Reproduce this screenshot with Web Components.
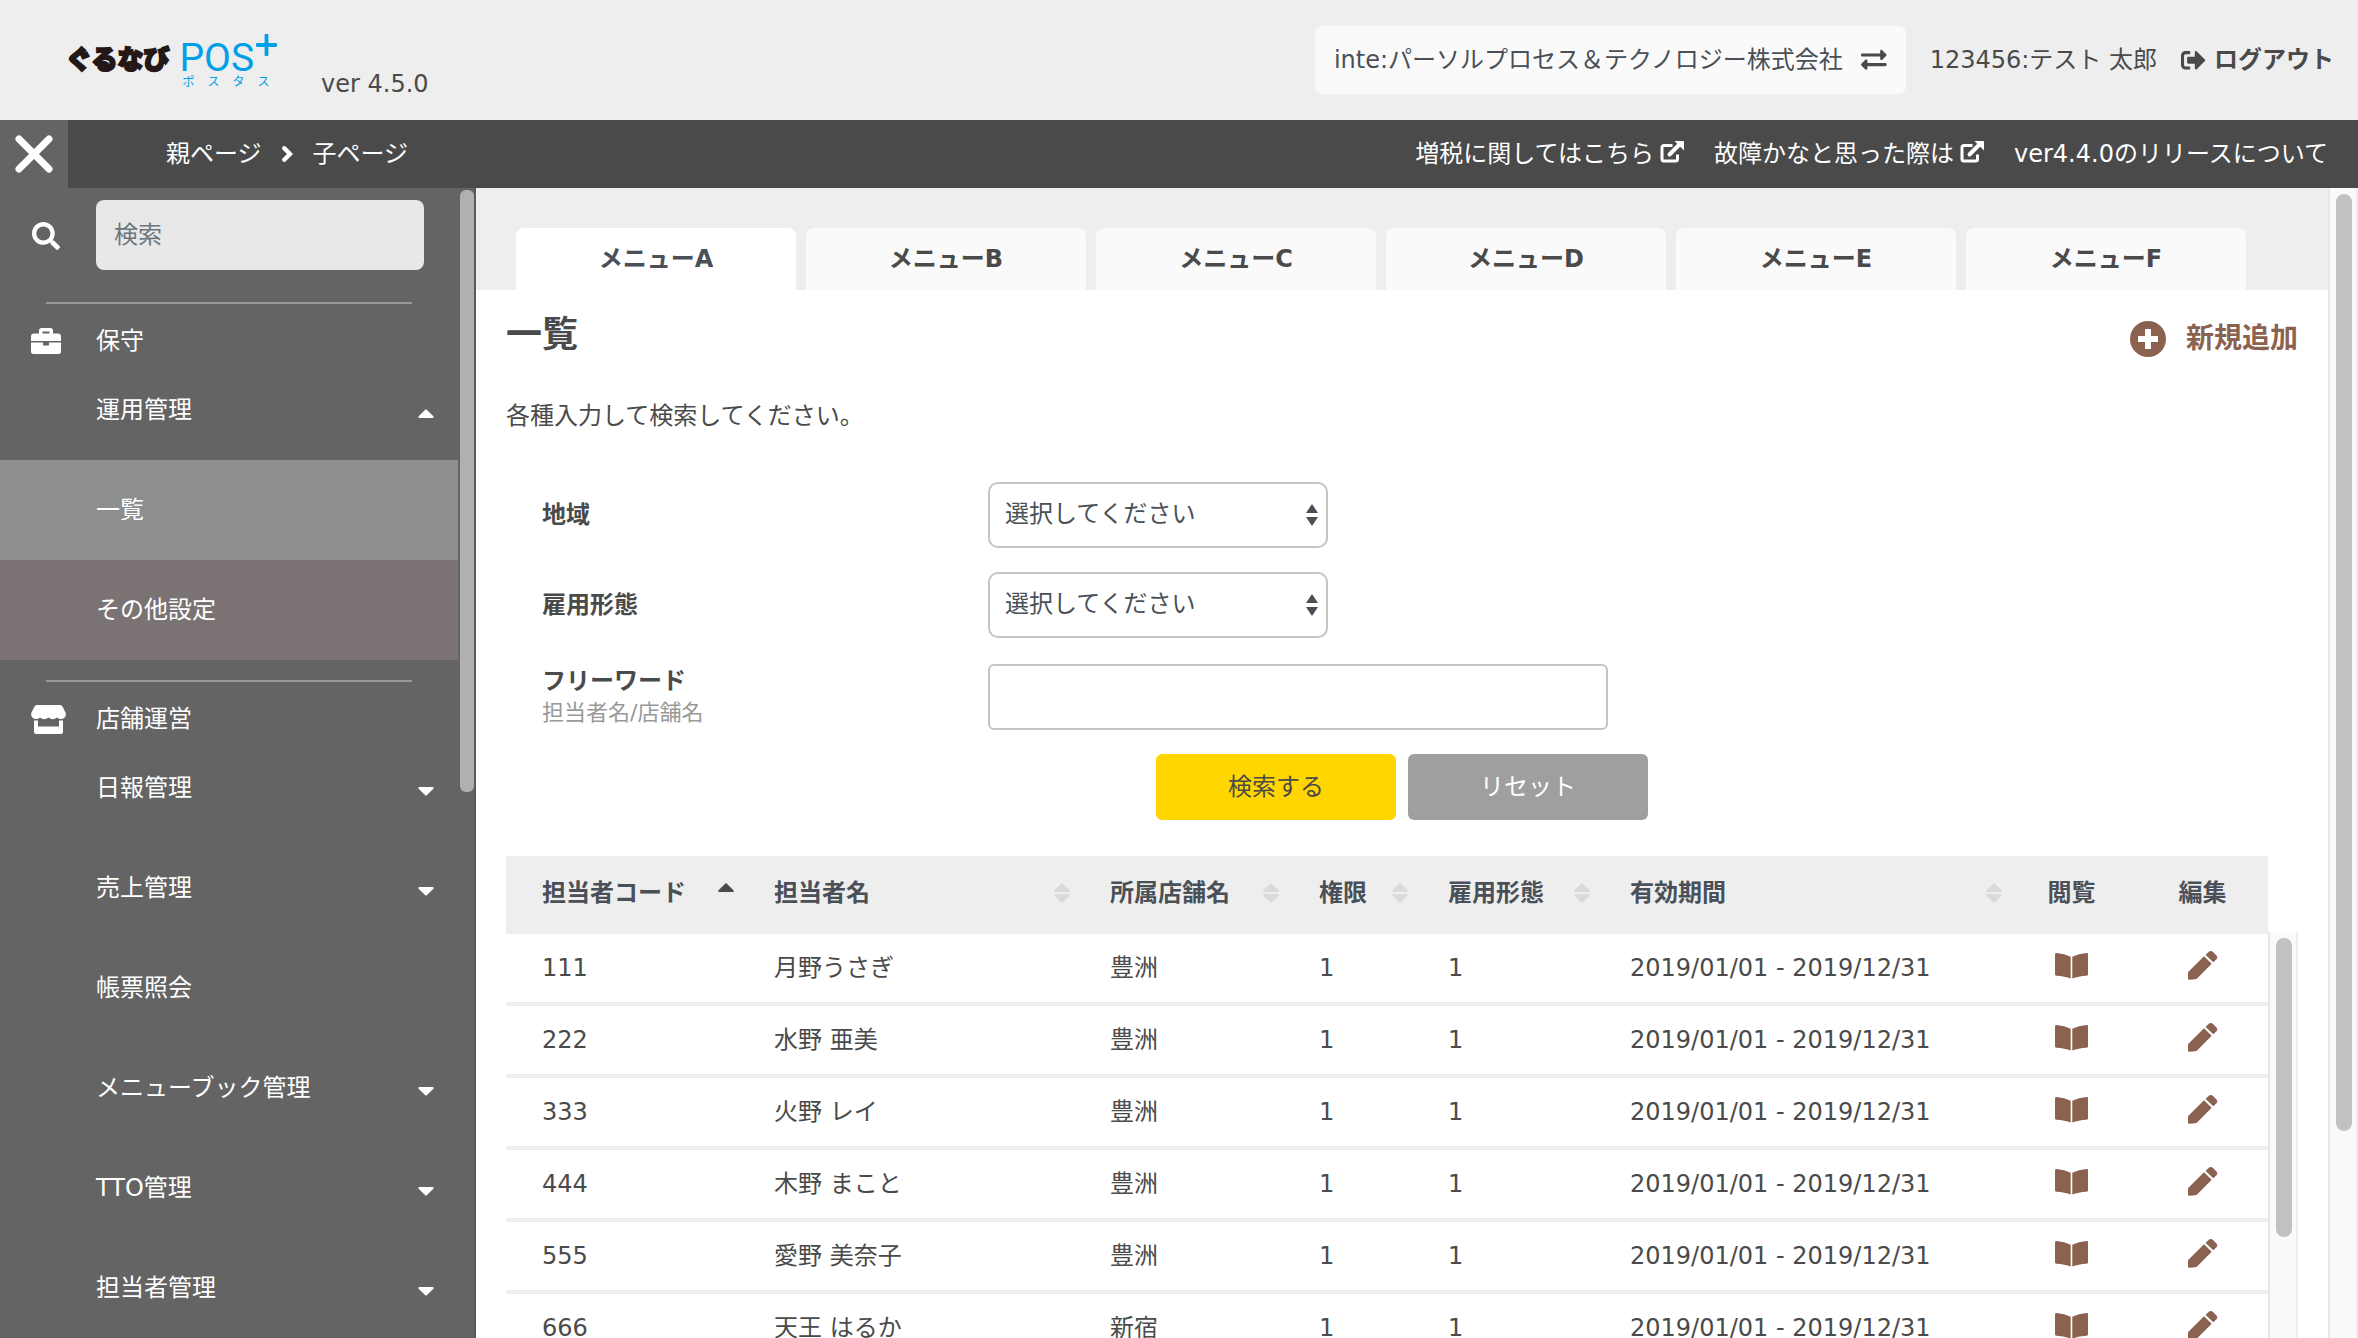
<!DOCTYPE html>
<html lang="ja">
<head>
<meta charset="utf-8">
<meta name="viewport" content="width=device-width, initial-scale=1">
<title>一覧</title>
<style>
  html, body { margin: 0; height: 100%; }
  body {
    font-family: "DejaVu Sans", "Noto Sans CJK JP", sans-serif;
    font-size: 24px;
    line-height: 36px;
    color: #4a4a4a;
    background: #fff;
    overflow: hidden;
  }
</style>
</head>
<body>
<pos-app></pos-app>

<script>
const base = `
  *, *::before, *::after { box-sizing: border-box; }
  a { color: inherit; text-decoration: none; }
  button, input, select { font: inherit; color: inherit; margin: 0; }
  button { cursor: pointer; border: 0; background: none; padding: 0; }
`;

class PosElement extends HTMLElement {
  connectedCallback() {
    if (this.shadowRoot) return;
    this.attachShadow({ mode: 'open' }).innerHTML = `<style>${base}${this.css()}</style>${this.html()}`;
  }
  css() { return ''; }
  html() { return '<slot></slot>'; }
}

const icons = {
  close: [38, 38, '<path d="M4 4L34 34M34 4L4 34" stroke="currentColor" stroke-width="7" stroke-linecap="round" fill="none"/>'],
  chevron: [11, 16, '<path d="M2.300 2.300L8 8L2.300 13.700" stroke="currentColor" stroke-width="4.400" stroke-linecap="round" fill="none"/>'],
  external: [24, 22, '<path d="M12.500 4.500H4A2 2 0 0 0 2 6.500V18a2 2 0 0 0 2 2H15.500a2 2 0 0 0 2-2V13.500" stroke="currentColor" stroke-width="3" fill="none"/><path d="M9.500 13.500L19 4" stroke="currentColor" stroke-width="4" stroke-linecap="round" fill="none"/><path d="M14.500 0H23Q24 0 24 1V9.500Z" fill="currentColor"/>'],
  swap: [26, 26, '<path transform="scale(.05)" fill="currentColor" d="M0 168v-16c0-13 11-24 24-24h360V80c0-21 26-32 41-17l80 80c9 9 9 25 0 34l-80 80c-15 15-41 4-41-17v-48H24c-13 0-24-11-24-24zm488 152H128v-48c0-21-26-32-41-17l-80 80c-9 9-9 25 0 34l80 80c15 15 41 4 41-17v-48h360c13 0 24-11 24-24v-16c0-13-11-24-24-24z"/>'],
  logout: [25, 24, '<path transform="scale(.048)" fill="currentColor" d="M497 273L329 441c-15 15-41 4.500-41-17v-96H152c-13.300 0-24-10.700-24-24v-96c0-13.300 10.700-24 24-24h136V88c0-21.400 25.900-32 41-17l168 168c9.300 9.400 9.300 24.600 0 34zM192 436v-40c0-6.600-5.400-12-12-12H96c-17.700 0-32-14.300-32-32V160c0-17.700 14.300-32 32-32h84c6.600 0 12-5.400 12-12V76c0-6.600-5.400-12-12-12H96c-53 0-96 43-96 96v192c0 53 43 96 96 96h84c6.600 0 12-5.400 12-12z"/>'],
  search: [29, 29, '<path transform="translate(1 1) scale(.0547)" fill="currentColor" d="M505 442.700L405.300 343c-4.500-4.500-10.600-7-17-7H372c27.600-35.300 44-79.700 44-128C416 93.100 322.900 0 208 0S0 93.100 0 208s93.100 208 208 208c48.300 0 92.700-16.400 128-44v16.300c0 6.400 2.500 12.500 7 17l99.700 99.700c9.400 9.400 24.600 9.400 33.900 0l28.300-28.300c9.400-9.400 9.400-24.600.1-34zM208 336c-70.700 0-128-57.200-128-128 0-70.700 57.200-128 128-128 70.700 0 128 57.200 128 128 0 70.700-57.200 128-128 128z"/>'],
  briefcase: [30, 26, '<path fill="currentColor" fill-rule="evenodd" d="M8 5.500V2.500Q8 0 10.500 0H19.500Q22 0 22 2.500V5.500H27Q30 5.500 30 8.500V13H0V8.500Q0 5.500 3 5.500ZM11.500 3.500V5.500H18.500V3.500ZM0 14.500H12V17.500H18V14.500H30V23.500Q30 26 27.500 26H2.500Q0 26 0 23.500Z"/>'],
  store: [35, 29, '<path fill="currentColor" d="M6 0H29Q30.500 0 31.500 1.500L34.500 7.500Q36 12.500 31 14Q28 14.500 26 12.500Q22 16 17.500 12.500Q13 16 9 12.500Q7 14.500 4 14Q-1 12.500.5 7.500L3.500 1.500Q4.500 0 6 0ZM3 15.500H7V21.500H28V15.500H32V27Q32 29 30 29H5Q3 29 3 27Z"/>'],
  up: [16, 10, '<path fill="currentColor" d="M8.700.7L15.400 7.300Q16.200 9 14.500 9H1.500Q-.2 9 .6 7.300L7.300.7Q8 0 8.700.7Z"/>'],
  down: [16, 10, '<path fill="currentColor" d="M8.700 8.300L15.400 1.700Q16.200 0 14.500 0H1.500Q-.2 0 .6 1.700L7.300 8.300Q8 9 8.700 8.300Z"/>'],
  spin: [12, 22, '<path fill="currentColor" d="M6 0L12 9H0ZM6 22L0 13H12Z"/>'],
  sort: [16, 20, '<path fill="currentColor" d="M8 0L15.500 7.300Q16.200 9 14.500 9H1.500Q-.2 9 .5 7.300ZM8 20L.5 12.700Q-.2 11 1.500 11H14.500Q16.200 11 15.500 12.700Z"/>'],
  sorted: [16, 20, '<path fill="currentColor" d="M8 0L15.500 7.300Q16.200 9 14.500 9H1.500Q-.2 9 .5 7.300Z"/>'],
  add: [36, 36, '<circle cx="18" cy="18" r="18" fill="currentColor"/><path d="M18 8V28M8 18H28" stroke="#fff" stroke-width="6"/>'],
  book: [33, 26, '<path fill="currentColor" d="M1.500 0Q9.500.8 15.700 3.700V25.600Q10 23.300 1.300 22.800Q0 22.600 0 21.500V1.400Q0 0 1.500 0ZM31.500 0Q23.500.8 17.300 3.700V25.600Q23 23.300 31.700 22.800Q33 22.600 33 21.500V1.400Q33 0 31.500 0Z"/>'],
  pencil: [30, 29, '<path fill="currentColor" d="M.6 20.600L16 5.300L23.700 12.700L9 27.400Q8.200 28.200 7 28.200L1.500 28.700Q0 28.700 0 27.200V22Q0 21.200.6 20.600ZM17.600 3.900L20.500 1Q22.700-.8 25 1L28.500 4.600Q30 6.500 28.500 8.200L25.300 11.300Z"/>'],
  plus: [21, 22, '<path d="M10.500 1.500V20.500M1.500 11H19.500" stroke="currentColor" stroke-width="3.800" stroke-linecap="round"/>'],
};

customElements.define('pos-icon', class extends PosElement {
  css() { return ':host { display: inline-flex; flex: none; } svg { display: block; }'; }
  html() {
    const [w, h, art] = icons[this.getAttribute('name')];
    return `<svg width="${w}" height="${h}" viewBox="0 0 ${w} ${h}" aria-hidden="true">${art}</svg>`;
  }
});

/* Vertical scroll track; --thumb is the thumb length in percent of the track. */
customElements.define('pos-rail', class extends PosElement {
  css() { return `
    :host { display: block; flex: none; width: 30px; padding: 6px; background: #fafafa; border-left: 2px solid #e8e8e8; border-right: 2px solid #ededed; box-sizing: border-box; }
    :host([dark]) { width: 18px; padding: 2px 0 0 2px; background: none; border-left: 0; border-right: 2px solid #5a5a5a; }
    div { height: var(--thumb); width: 16px; border-radius: 8px; background: #c1c1c1; }
    :host([dark]) div { width: 14px; border-radius: 6px; background: #b0b0b0; }`; }
  html() { return '<div></div>'; }
});

customElements.define('pos-logo', class extends PosElement {
  css() { return `
    :host { display: flex; align-items: flex-start; gap: 10px; padding-top: 10px; }
    .brand { font: 900 26px/32px "Noto Sans CJK JP", sans-serif; color: #231815; -webkit-text-stroke: 2px #231815; }
    .pos { display: flex; flex-direction: column; color: #00a0e9; }
    .word { display: flex; align-items: flex-start; gap: 2px; font: 400 39px/32px Roboto, sans-serif; }
    .word pos-icon { margin-top: -8px; }
    .kana { display: flex; gap: 13px; padding-left: 3px; font: 12px/14px "Noto Sans CJK JP", sans-serif; }`; }
  html() { return `
    <span class="brand">ぐるなび</span>
    <span class="pos">
      <span class="word"><span>POS</span><pos-icon name="plus"></pos-icon></span>
      <span class="kana"><span>ポ</span><span>ス</span><span>タ</span><span>ス</span></span>
    </span>`; }
});

customElements.define('pos-header', class extends PosElement {
  css() { return `
    :host { display: block; flex: none; background: #eee; }
    header { display: flex; align-items: center; height: 120px; padding: 0 24px 0 66px; }
    .ver { margin: 48px auto 0 44px; }
    .company { display: flex; align-items: center; gap: 18px; height: 68px; padding: 0 19px; border-radius: 8px; background: #fafafa; color: #495057; white-space: nowrap; }
    .company pos-icon { color: #4a4a4a; }
    .user { margin: 0 24px; white-space: nowrap; }
    .logout { display: flex; align-items: center; gap: 8px; font-weight: 700; white-space: nowrap; }`; }
  html() { return `
    <header>
      <pos-logo></pos-logo>
      <span class="ver">ver 4.5.0</span>
      <button class="company" type="button"><span>inte:パーソルプロセス＆テクノロジー株式会社</span><pos-icon name="swap"></pos-icon></button>
      <span class="user">123456:テスト 太郎</span>
      <a class="logout" href="#logout"><pos-icon name="logout"></pos-icon>ログアウト</a>
    </header>`; }
});

customElements.define('pos-nav', class extends PosElement {
  css() { return `
    :host { display: flex; flex: none; align-items: center; height: 68px; padding-right: 30px; background: #4a4a4a; color: #fff; }
    .close { display: grid; place-items: center; width: 68px; height: 68px; background: #646464; }
    nav { display: flex; align-items: center; }
    .crumbs { gap: 20px; margin: 0 auto 0 98px; }
    .links { gap: 30px; }
    a { display: flex; align-items: center; gap: 6px; white-space: nowrap; }
    a pos-icon { padding-bottom: 4px; }`; }
  html() { return `
    <button class="close" type="button" aria-label="閉じる"><pos-icon name="close"></pos-icon></button>
    <nav class="crumbs"><a href="#parent">親ページ</a><pos-icon name="chevron"></pos-icon><a href="#child">子ページ</a></nav>
    <nav class="links">
      <a href="#tax">増税に関してはこちら<pos-icon name="external"></pos-icon></a>
      <a href="#help">故障かなと思った際は<pos-icon name="external"></pos-icon></a>
      <a href="#release">ver4.4.0のリリースについて</a>
    </nav>`; }
});

customElements.define('side-section', class extends PosElement {
  css() { return `
    :host { display: block; padding-top: 20px; }
    hr { margin: 0 46px 18px; border: 0; height: 2px; background: #999; }
    h2 { display: flex; align-items: center; margin: 0; height: 38px; padding-left: 31px; font: inherit; }
    .icon { display: flex; width: 65px; }`; }
  html() { return `<hr><h2><span class="icon"><pos-icon name="${this.getAttribute('icon')}"></pos-icon></span>${this.getAttribute('label')}</h2><slot></slot>`; }
});

customElements.define('side-item', class extends PosElement {
  css() { return `
    :host { display: block; }
    :host([active]) { background: #8e8e8e; }
    :host([sub]) { background: #7b7373; }
    a { display: flex; align-items: center; justify-content: space-between; height: 100px; padding: 0 24px 0 96px; }
    pos-icon { padding-top: 8px; }`; }
  html() {
    const caret = this.getAttribute('caret');
    return `<a href="#"><slot></slot>${caret ? `<pos-icon name="${caret}"></pos-icon>` : ''}</a>`;
  }
});

customElements.define('pos-sidebar', class extends PosElement {
  css() { return `
    :host { display: flex; flex: none; width: 476px; background: #646464; color: #fff; overflow: hidden; }
    aside { flex: 1; min-width: 0; }
    .search { display: flex; align-items: center; padding: 12px 34px 12px 31px; }
    label { display: flex; width: 65px; }
    input { flex: 1; min-width: 0; height: 70px; padding: 0 18px; border: 0; border-radius: 8px; background: #e8e8e8; color: #4a4a4a; }
    input::placeholder { color: #6c757d; opacity: 1; }`; }
  html() { return `
    <aside>
      <div class="search"><label for="q" aria-label="検索"><pos-icon name="search"></pos-icon></label><input id="q" type="text" placeholder="検索"></div>
      <side-section icon="briefcase" label="保守">
        <side-item caret="up">運用管理</side-item>
        <side-item active>一覧</side-item>
        <side-item sub>その他設定</side-item>
      </side-section>
      <side-section icon="store" label="店舗運営">
        <side-item caret="down">日報管理</side-item>
        <side-item caret="down">売上管理</side-item>
        <side-item>帳票照会</side-item>
        <side-item caret="down">メニューブック管理</side-item>
        <side-item caret="down">TTO管理</side-item>
        <side-item caret="down">担当者管理</side-item>
      </side-section>
    </aside>
    <pos-rail dark style="--thumb: 52.400%"></pos-rail>`; }
});

customElements.define('pos-tabs', class extends PosElement {
  css() { return `
    :host { display: flex; gap: 10px; padding: 40px 82px 0 40px; background: #eee; }
    a { flex: 0 1 280px; height: 62px; line-height: 62px; text-align: center; font-weight: 700; white-space: nowrap; background: #fafafa; border-radius: 8px 8px 0 0; }
    a[aria-current] { background: #fff; color: #495057; }`; }
  html() {
    return [...'ABCDEF'].map((c, i) => `<a href="#${c}"${i ? '' : ' aria-current="page"'}>メニュー${c}</a>`).join('');
  }
});

customElements.define('pos-field', class extends PosElement {
  css() { return `
    :host { display: flex; align-items: center; padding-left: 36px; }
    :host([text]) { padding-top: 2px; }
    .label { width: 446px; font-weight: 700; }
    .label label { display: block; line-height: 32px; }
    small { display: block; font-size: 22px; line-height: 32px; font-weight: 400; color: #999; }
    .select { display: grid; width: 340px; color: #495057; }
    .select > * { grid-area: 1 / 1; }
    .select pos-icon { place-self: center end; padding-right: 10px; pointer-events: none; }
    select, input { width: 100%; height: 66px; border: 2px solid #c4c4c4; border-radius: 10px; background: #fff; padding: 0 15px 3px; appearance: none; }
    input { width: 620px; border-radius: 6px; }`; }
  html() {
    const note = this.getAttribute('note');
    const control = this.hasAttribute('text')
      ? '<input id="f" type="text">'
      : '<div class="select"><select id="f"><option>選択してください</option></select><pos-icon name="spin"></pos-icon></div>';
    return `<div class="label"><label for="f">${this.getAttribute('label')}</label>${note ? `<small>${note}</small>` : ''}</div>${control}`;
  }
});

customElements.define('staff-table', class extends PosElement {
  css() { return `
    :host { display: flex; flex: 1; min-height: 0; }
    .view { flex: 1; min-width: 0; overflow: hidden; }
    table { width: 100%; table-layout: fixed; border-collapse: separate; border-spacing: 0; }
    th, td { padding: 0 0 0 36px; text-align: left; white-space: nowrap; }
    th { height: 78px; padding-bottom: 4px; background: #eee; color: #495057; }
    td { height: 72px; border-bottom: 4px solid #eee; }
    .act { padding-left: 0; text-align: center; }
    .act a { display: inline-flex; vertical-align: middle; padding-bottom: 6px; color: #8b614f; }
    .sort { display: flex; align-items: center; justify-content: space-between; width: 100%; padding-right: 4px; font-weight: 700; }
    .sort pos-icon { color: #dadada; }
    .sort pos-icon[name=sorted] { color: #4a4a4a; }
    pos-rail { margin-top: 76px; }`; }
  html() {
    const cols = [['担当者コード', 232], ['担当者名', 336], ['所属店舗名', 209], ['権限', 129], ['雇用形態', 182], ['有効期間', 0]];
    const rows = [['111', '月野うさぎ', '豊洲'], ['222', '水野 亜美', '豊洲'], ['333', '火野 レイ', '豊洲'], ['444', '木野 まこと', '豊洲'], ['555', '愛野 美奈子', '豊洲'], ['666', '天王 はるか', '新宿']];
    return `
    <div class="view"><table>
      <colgroup>${cols.map(c => `<col${c[1] ? ` style="width:${c[1]}px"` : ''}>`).join('')}<col style="width:131px"><col style="width:131px"></colgroup>
      <thead><tr>${cols.map((c, i) => `<th><button class="sort" type="button">${c[0]}<pos-icon name="${i ? 'sort' : 'sorted'}"></pos-icon></button></th>`).join('')}<th class="act">閲覧</th><th class="act">編集</th></tr></thead>
      <tbody>${rows.map(r => `<tr>${r.map(v => `<td>${v}</td>`).join('')}<td>1</td><td>1</td><td>2019/01/01 - 2019/12/31</td>
        <td class="act"><a href="#view" aria-label="閲覧"><pos-icon name="book"></pos-icon></a></td>
        <td class="act"><a href="#edit" aria-label="編集"><pos-icon name="pencil"></pos-icon></a></td></tr>`).join('')}</tbody>
    </table></div>
    <pos-rail style="--thumb: 76%"></pos-rail>`;
  }
});

customElements.define('pos-main', class extends PosElement {
  css() { return `
    :host { display: flex; flex: 1; min-width: 0; min-height: 0; }
    main { flex: 1; min-width: 0; display: flex; flex-direction: column; }
    .body { flex: 1; min-height: 0; display: flex; flex-direction: column; padding: 20px 30px 0; }
    .head { display: flex; justify-content: space-between; align-items: flex-start; height: 56px; }
    h1 { margin: 0; font-size: 36px; line-height: 50px; }
    .add { display: flex; align-items: center; gap: 20px; font-size: 28px; line-height: 58px; font-weight: 700; color: #8b614f; }
    p { margin: 32px 0 48px; }
    form { display: flex; flex-direction: column; gap: 24px; }
    .buttons { display: flex; justify-content: center; gap: 12px; margin-bottom: 36px; }
    .buttons button { width: 240px; height: 66px; border-radius: 6px; background: #ffd600; }
    .buttons button[type=reset] { background: #9f9f9f; color: #fff; }`; }
  html() { return `
    <main>
      <pos-tabs></pos-tabs>
      <div class="body">
        <div class="head"><h1>一覧</h1><a class="add" href="#new"><pos-icon name="add"></pos-icon>新規追加</a></div>
        <p>各種入力して検索してください。</p>
        <form>
          <pos-field label="地域"></pos-field>
          <pos-field label="雇用形態"></pos-field>
          <pos-field label="フリーワード" note="担当者名/店舗名" text></pos-field>
          <div class="buttons"><button type="button">検索する</button><button type="reset">リセット</button></div>
        </form>
        <staff-table></staff-table>
      </div>
    </main>
    <pos-rail style="--thumb: 82.300%"></pos-rail>`; }
});

customElements.define('pos-app', class extends PosElement {
  css() { return `
    :host { display: flex; flex-direction: column; height: 100vh; overflow: hidden; }
    .work { display: flex; flex: 1; min-height: 0; }`; }
  html() { return '<pos-header></pos-header><pos-nav></pos-nav><div class="work"><pos-sidebar></pos-sidebar><pos-main></pos-main></div>'; }
});
</script>
</body>
</html>
